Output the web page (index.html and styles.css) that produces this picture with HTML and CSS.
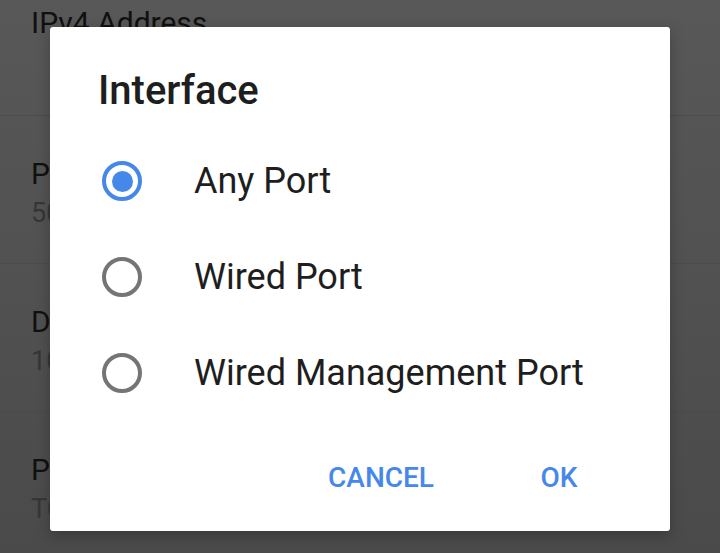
FILE: index.html
```html
<!DOCTYPE html>
<html>
<head>
<meta charset="utf-8">
<link rel="stylesheet" href="styles.css">
</head>
<body>
<div class="screen">
  <ul class="settings">
    <li class="item item-first"><div class="title">IPv4 Address</div></li>
    <li class="item"><div class="title">Port</div><div class="sub">5060</div></li>
    <li class="item"><div class="title">DNS Server</div><div class="sub">10.0.0.1</div></li>
    <li class="item item-last"><div class="title">Protocol</div><div class="sub">TCP</div></li>
  </ul>
  <div class="dialog">
    <h1 class="dialog-title">Interface</h1>
    <div class="options">
      <label class="option">
        <span class="radio checked"><span class="dot"></span></span>
        <span class="label">Any Port</span>
      </label>
      <label class="option">
        <span class="radio"></span>
        <span class="label">Wired Port</span>
      </label>
      <label class="option">
        <span class="radio"></span>
        <span class="label">Wired Management Port</span>
      </label>
    </div>
    <div class="actions">
      <button class="btn btn-cancel">CANCEL</button>
      <button class="btn btn-ok">OK</button>
    </div>
  </div>
</div>
</body>
</html>
```

FILE: styles.css
```css
* { box-sizing: border-box; }
html, body {
  margin: 0;
  padding: 0;
  width: 720px;
  height: 553px;
  overflow: hidden;
}
body {
  font-family: Roboto, "Noto Sans", sans-serif;
  background: linear-gradient(#585858, #4a4a4a);
}
.screen {
  position: relative;
  width: 720px;
  height: 553px;
}
.settings {
  list-style: none;
  margin: 0;
  padding: 0;
}
.item {
  height: 148px;
  padding: 40px 0 0 31px;
  border-bottom: 1px solid #4b4b4b;
}
.item-first {
  height: 116px;
  padding-top: 5px;
}
.title {
  font-size: 30px;
  line-height: 36px;
  color: #101010;
}
.sub {
  margin-top: 5px;
  font-size: 27px;
  line-height: 32px;
  color: #363636;
}
.dialog {
  position: absolute;
  left: 50px;
  top: 27px;
  width: 620px;
  height: 504px;
  background: #fff;
  border-radius: 3px;
  box-shadow: 0 4px 14px rgba(0,0,0,0.25);
  padding-top: 41px;
}
.dialog-title {
  margin: 0 0 0 48px;
  font-size: 40px;
  line-height: 46px;
  font-weight: 500;
  color: #1e1e1e;
}
.options {
  margin-top: 19px;
}
.option {
  display: flex;
  align-items: center;
  height: 96px;
  padding-left: 52px;
}
.radio {
  width: 40px;
  height: 40px;
  border-radius: 50%;
  border: 4px solid #757575;
  display: flex;
  align-items: center;
  justify-content: center;
  flex: none;
}
.radio.checked {
  border-color: #4688ea;
}
.dot {
  width: 21px;
  height: 21px;
  border-radius: 50%;
  background: #4688ea;
}
.label {
  margin-left: 52px;
  font-size: 36px;
  color: #1e1e1e;
}
.actions {
  display: flex;
  justify-content: flex-end;
  align-items: center;
  gap: 29px;
  margin-top: 20px;
  height: 72px;
  padding-right: 47px;
}
.btn {
  border: none;
  background: none;
  font-family: Roboto, "Noto Sans", sans-serif;
  font-weight: 500;
  font-size: 28px;
  color: #4688ea;
  height: 72px;
  padding: 0 32px;
  min-width: 128px;
}
```
